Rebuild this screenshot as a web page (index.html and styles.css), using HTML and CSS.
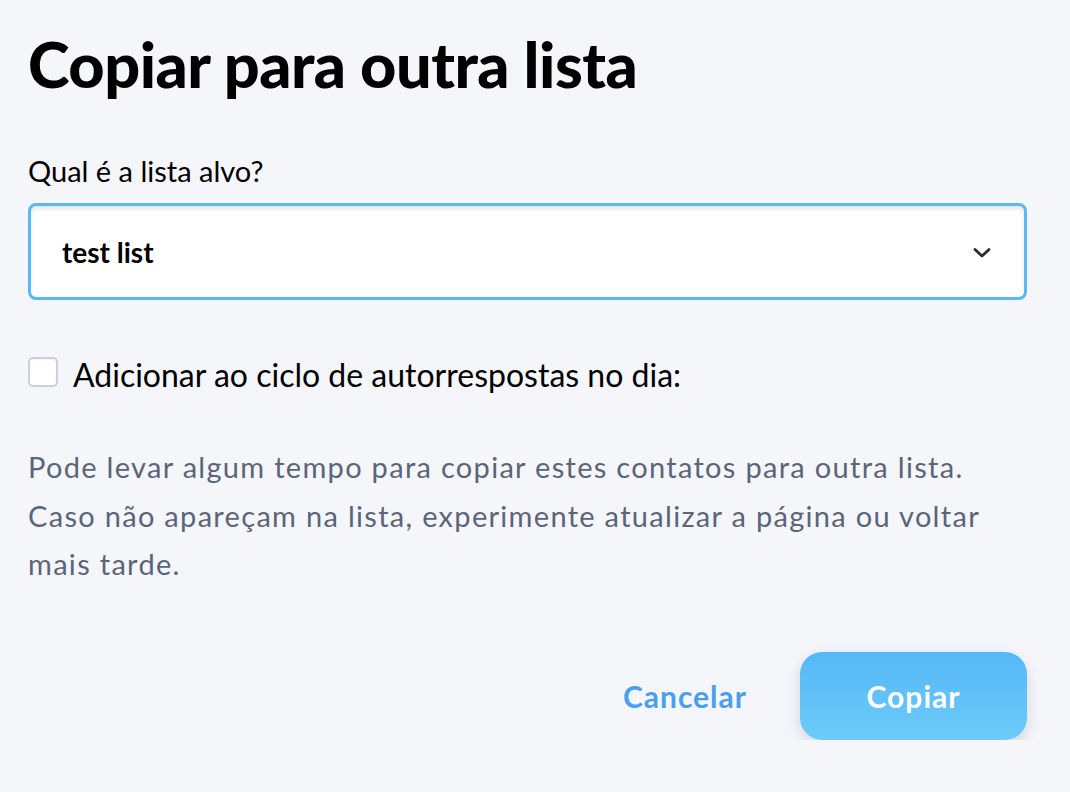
FILE: index.html
```html
<!DOCTYPE html>
<html lang="pt">
<head>
  <meta charset="UTF-8" />
  <title>Copiar para outra lista</title>
  <link rel="stylesheet" href="styles.css">
</head>
<body>
  <div class="dialog">
    <h1>Copiar para outra lista</h1>

    <label class="field-label" for="targetList">Qual é a lista alvo?</label>
    <div class="select-box" id="targetList">
      <span class="select-value">test list</span>
      <svg class="chevron" width="18" height="10" viewBox="0 0 18 10">
        <path d="M2 1.5 L9 8 L16 1.5" fill="none" stroke="#272b33" stroke-width="2.8" stroke-linecap="round" stroke-linejoin="round"/>
      </svg>
    </div>

    <div class="checkbox-row">
      <span class="checkbox"></span>
      <span class="checkbox-text">Adicionar ao ciclo de autorrespostas no dia:</span>
    </div>

    <p class="note">Pode levar algum tempo para copiar estes contatos para outra lista. Caso não apareçam na lista, experimente atualizar a página ou voltar mais tarde.</p>

    <div class="actions">
      <button class="btn-link">Cancelar</button>
      <button class="btn-primary">Copiar</button>
    </div>
  </div>
</body>
</html>
```

FILE: styles.css
```css
body {
  margin: 0;
  background: #f5f6fa;
  font-family: 'Lato', sans-serif;
  color: #000;
}

.dialog {
  padding: 32px 43px 0 28px;
}

h1 {
  margin: 0;
  font-size: 63px;
  font-weight: 900;
  line-height: 63px;
  letter-spacing: -0.5px;
}

.field-label {
  display: block;
  margin-top: 58px;
  font-size: 29px;
  line-height: 36px;
}

.select-box {
  margin-top: 14px;
  height: 97px;
  box-sizing: border-box;
  border: 3px solid #5ab8f5;
  border-radius: 8px;
  background: #fff;
  box-shadow: inset 0 3px 4px rgba(0, 0, 0, 0.10);
  display: flex;
  align-items: center;
  justify-content: space-between;
  padding: 0 33px 0 31px;
}

.select-value {
  font-size: 28px;
  font-weight: 700;
}

.chevron {
  margin-top: 2px;
}

.checkbox-row {
  display: flex;
  align-items: flex-start;
  gap: 15px;
  margin-top: 55px;
}

.checkbox {
  width: 30px;
  height: 30px;
  margin-top: 2px;
  box-sizing: border-box;
  border: 2px solid #cdd0d6;
  border-radius: 5px;
  background: #fff;
  box-shadow: inset 0 1px 2px rgba(0, 0, 0, 0.06);
}

.checkbox-text {
  font-size: 32px;
  line-height: 40px;
}

.note {
  margin: 48px 0 0 0;
  font-size: 29px;
  line-height: 48.5px;
  letter-spacing: 1.3px;
  color: #5a6579;
}

.actions {
  display: flex;
  justify-content: flex-end;
  align-items: center;
  gap: 53px;
  margin-top: 63px;
}

.btn-link {
  background: none;
  border: none;
  padding: 0;
  font-family: inherit;
  font-size: 30px;
  font-weight: 700;
  letter-spacing: 1px;
  color: #4a9ff0;
  cursor: pointer;
}

.btn-primary {
  width: 227px;
  height: 88px;
  border: none;
  border-radius: 22px;
  background: linear-gradient(#55b8f7, #6dcbf9);
  box-shadow: 0 5px 14px rgba(80, 100, 130, 0.22);
  font-family: inherit;
  font-size: 30px;
  font-weight: 700;
  letter-spacing: 1px;
  color: #fff;
  cursor: pointer;
}
```
